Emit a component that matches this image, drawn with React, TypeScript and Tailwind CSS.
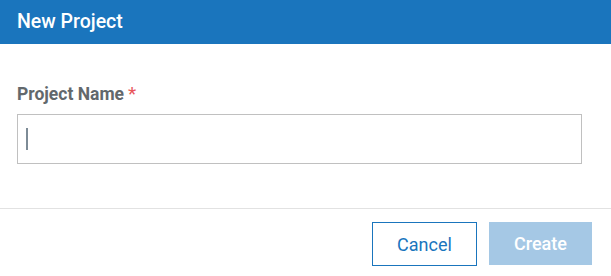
import React from "react";

export default function App() {
  return (
    <div className="w-[611px] h-[276px] bg-white flex flex-col" style={{ fontFamily: "Roboto, 'Liberation Sans', sans-serif" }}>
      <div className="h-[44px] bg-[#1a75bd] flex items-center px-[17px] shrink-0">
        <span className="text-white text-[19.5px] font-medium leading-none">New Project</span>
      </div>
      <div className="px-[17px] pt-[38px] h-[165px] shrink-0 border-b border-[#e2e2e2]">
        <div className="flex items-start text-[17.5px] font-bold text-[#62686c] leading-[24px]">
          <span>Project Name</span>
          <span className="text-[#e8565a] ml-[4px] font-normal text-[19px]">*</span>
        </div>
        <div className="mt-[8px] w-[565px] h-[50px] border border-[#c0c0c0] flex items-center pl-[8px]">
          <div className="w-[2px] h-[22px] bg-[#7d8b96]" />
        </div>
      </div>
      <div className="flex justify-end gap-[12px] pr-[19px] pt-[13px]">
        <button className="w-[105px] h-[44px] border border-[#1a75bd] text-[#1a75bd] text-[18px] bg-white">Cancel</button>
        <button className="w-[103px] h-[43px] bg-[#a5c8e5] text-white text-[18px] font-medium">Create</button>
      </div>
    </div>
  );
}
